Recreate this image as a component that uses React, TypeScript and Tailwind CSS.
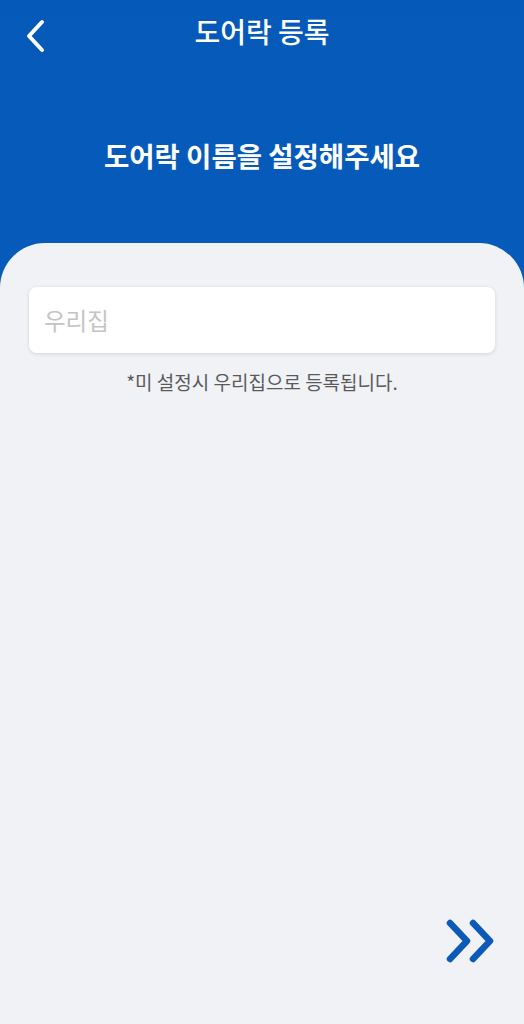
import React from 'react';

const font = { fontFamily: '"Noto Sans CJK KR", "Noto Sans", sans-serif' };

export default function App() {
  return (
    <div className="flex h-[1024px] w-full flex-col bg-gradient-to-b from-[#055ab9] to-[#0b5fbd]" style={font}>
      {/* header */}
      <div className="relative flex h-[66px] items-center justify-center pb-[5px]">
        <button className="absolute left-[20px] top-[14px] p-1">
          <svg width="24" height="36" viewBox="0 0 24 36" fill="none">
            <path d="M18 4 L5 18 L18 32" stroke="white" strokeWidth="4" strokeLinecap="round" strokeLinejoin="round" />
          </svg>
        </button>
        <h1 className="text-[28px] font-medium leading-none text-white">도어락 등록</h1>
      </div>

      <div className="flex h-[177px] items-start justify-center pt-[76px]">
        <h2 className="text-[27.5px] font-bold leading-none text-white">도어락 이름을 설정해주세요</h2>
      </div>

      {/* content */}
      <div className="flex flex-1 flex-col rounded-t-[45px] bg-[#f0f2f6] px-[29px] pt-[44px]">
        <input
          className="h-[66px] w-full rounded-[8px] bg-white px-[15px] text-[23.5px] text-gray-800 shadow-[0_1px_4px_rgba(0,0,0,0.12)] outline-none placeholder:text-[#c4c4c4]"
          placeholder="우리집"
          style={font}
        />
        <p className="mt-[19px] text-center text-[19px] leading-none text-[#5a5a5a]">*미 설정시 우리집으로 등록됩니다.</p>

        <div className="mt-auto mb-[59px] flex justify-end">
          <svg width="50" height="46" viewBox="0 0 50 46" fill="none">
            <path d="M5 4 L22 22 L5 40" stroke="#0b5ab8" strokeWidth="6.5" strokeLinecap="round" strokeLinejoin="round" />
            <path d="M28 4 L45 22 L28 40" stroke="#0b5ab8" strokeWidth="6.5" strokeLinecap="round" strokeLinejoin="round" />
          </svg>
        </div>
      </div>
    </div>
  );
}
